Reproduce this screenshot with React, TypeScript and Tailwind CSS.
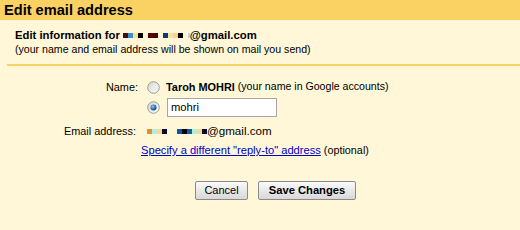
import React from "react";

const Blk = ({ c }: { c: string }) => (
  <span className="inline-block w-[5px] h-[5px]" style={{ backgroundColor: c }} />
);

const Radio = ({ checked }: { checked?: boolean }) => (
  <svg width="13" height="13" viewBox="0 0 13 13" className="shrink-0">
    <defs>
      <linearGradient id={checked ? "rg1" : "rg0"} x1="0" y1="0" x2="1" y2="1">
        <stop offset="0" stopColor="#d4d4cf" />
        <stop offset="1" stopColor="#ffffff" />
      </linearGradient>
      <radialGradient id="dot" cx="0.4" cy="0.35" r="0.7">
        <stop offset="0" stopColor="#9fd0f2" />
        <stop offset="0.5" stopColor="#2d7cc2" />
        <stop offset="1" stopColor="#0d3f78" />
      </radialGradient>
    </defs>
    <circle cx="6.5" cy="6.5" r="5.8" fill={`url(#${checked ? "rg1" : "rg0"})`} stroke="#9a9a96" strokeWidth="1" />
    {checked && <circle cx="6.5" cy="6.5" r="3" fill="url(#dot)" />}
  </svg>
);

export default function App() {
  return (
    <div className="w-[520px] h-[230px] bg-[#fff7d7] text-black overflow-hidden font-['Liberation_Sans',Arial,sans-serif]">
      <div className="h-[20px] bg-[#fad163] pl-[4px] text-[14.6px] font-bold leading-[20px]">
        Edit email address
      </div>
      <div className="pl-[15px] pt-[8px]">
        <div className="flex items-center h-[14px] text-[11.3px] font-bold">
          <span>Edit information for</span>
          <span className="flex ml-[3px]">
            <Blk c="#4a0c0c" />
            <Blk c="#3b8fcb" />
            <Blk c="#fbe09a" />
            <Blk c="#000000" />
            <Blk c="transparent" />
            <Blk c="#5a0505" />
            <Blk c="#3d0a0a" />
            <Blk c="transparent" />
            <Blk c="#043c7c" />
            <Blk c="#fde3a0" />
            <Blk c="#fbd38a" />
            <Blk c="#000000" />
            <Blk c="transparent" />
            <span className="inline-block w-[2px] h-[5px] bg-[#a6e0e8]" />
          </span>
          <span>@gmail.com</span>
        </div>
        <div className="h-[14px] leading-[14px] text-[10.6px]">
          (your name and email address will be shown on mail you send)
        </div>
      </div>
      <div className="ml-[7px] mt-[8px] h-[2px] bg-[#fad163]" />

      <div className="grid grid-cols-[138px_1fr] gap-x-[3px] text-[10.9px] mt-[12px]">
        <div className="text-right h-[18px] leading-[18px]">Name:</div>
        <div className="flex items-center h-[18px]">
          <span className="ml-[6px]">
            <Radio />
          </span>
          <span className="ml-[6px] font-bold">Taroh MOHRI</span>
          <span className="ml-[3px] text-[10.6px]">(your name in Google accounts)</span>
        </div>

        <div />
        <div className="flex items-center h-[21px] mt-[1px]">
          <span className="ml-[6px]">
            <Radio checked />
          </span>
          <div className="ml-[7px] w-[110px] h-[19px] border border-[#a5a5a5] bg-white px-[3px] leading-[17px] text-[11.2px]">
            mohri
          </div>
        </div>

        <div className="text-right pr-[2px] h-[18px] leading-[18px] mt-[4px]">Email address:</div>
        <div className="flex items-center h-[18px] mt-[4px] text-[11.6px]">
          <span className="flex ml-[6px]">
            <Blk c="#e0902f" />
            <Blk c="#b9ece0" />
            <Blk c="#fbd890" />
            <Blk c="#0a0a30" />
            <Blk c="transparent" />
            <Blk c="transparent" />
            <Blk c="#0c5a9a" />
            <Blk c="#000000" />
            <Blk c="#10609e" />
            <Blk c="#b4f0d8" />
            <Blk c="#fbd890" />
            <Blk c="#0a0a30" />
          </span>
          <span>@gmail.com</span>
        </div>

        <div />
        <div className="h-[18px] leading-[18px] text-[11.15px] mt-[1px]">
          <span className="text-[#0000cc] underline">Specify a different "reply-to" address</span>
          <span className="ml-[3px] text-[10.8px]">(optional)</span>
        </div>
      </div>

      <div className="flex gap-[10px] pl-[195px] mt-[22px]">
        <button className="w-[53px] h-[19px] border border-[#8a8a8a] rounded-[2px] bg-gradient-to-b from-[#fafafa] to-[#d8d8d8] text-[11px] leading-[17px] text-black">
          Cancel
        </button>
        <button className="w-[98px] h-[19px] border border-[#8a8a8a] rounded-[2px] bg-gradient-to-b from-[#fafafa] to-[#d8d8d8] text-[11.2px] font-bold leading-[17px] text-black">
          Save Changes
        </button>
      </div>
    </div>
  );
}
